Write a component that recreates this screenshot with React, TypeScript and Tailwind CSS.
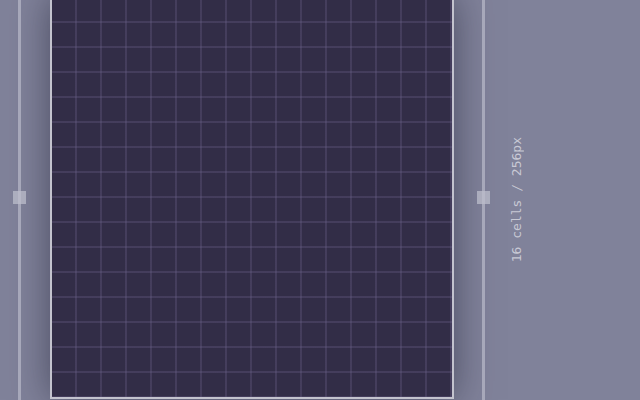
import React from "react";

export default function App() {
  return (
    <div className="w-[640px] h-[400px] overflow-hidden bg-[#80829a] flex items-start">
      {/* left rail */}
      <div className="relative ml-[18px] w-[3px] h-[400px] bg-[#a7a8ba]">
        <div className="absolute left-[-5px] top-[191px] w-[13px] h-[13px] bg-[#bcbdcb]/75" />
      </div>
      {/* canvas */}
      <div className="ml-[29px] mt-[-4px] w-[404px] h-[403px] border-2 border-[#c3c3ce] bg-[#322d47] shadow-[0_0_36px_rgba(30,30,50,0.55)] bg-[linear-gradient(to_right,transparent_23px,rgba(110,100,140,0.3)_23px,rgba(110,100,140,0.3)_25px),linear-gradient(to_bottom,transparent_23px,rgba(110,100,140,0.3)_23px,rgba(110,100,140,0.3)_25px)] bg-[size:25px_25px]" />
      {/* right rail */}
      <div className="relative ml-[28px] w-[3px] h-[400px] bg-[#a7a8ba]">
        <div className="absolute left-[-5px] top-[191px] w-[13px] h-[13px] bg-[#bcbdcb]/75" />
      </div>
      {/* label */}
      <div className="ml-[25px] h-[400px] flex items-center">
        <span
          className="[writing-mode:vertical-rl] rotate-180 text-[13px] leading-[14px] text-[#c8c9d5]"
          style={{ fontFamily: '"DejaVu Sans Mono", monospace' }}
        >
          16 cells / 256px
        </span>
      </div>
    </div>
  );
}
